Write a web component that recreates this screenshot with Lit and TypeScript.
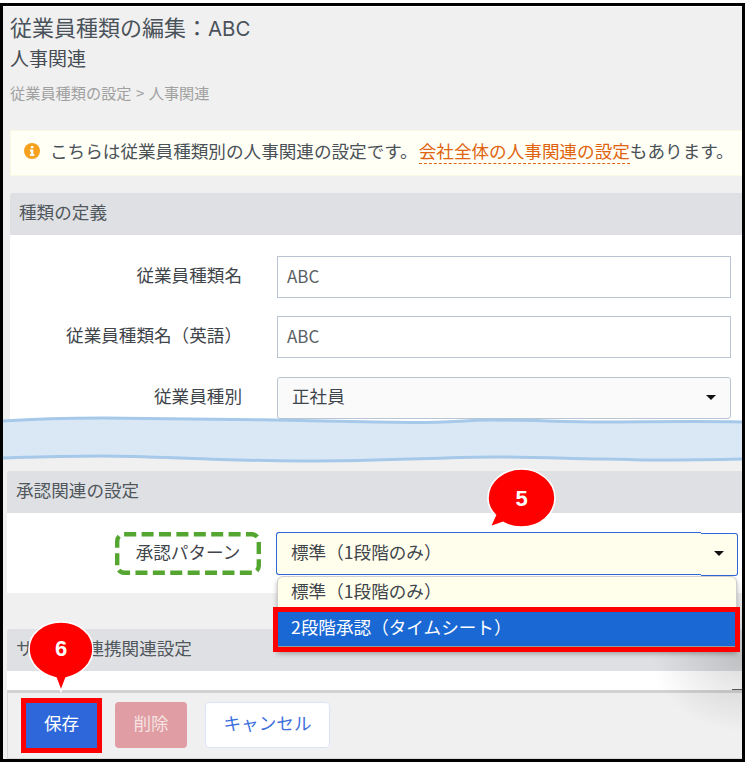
import { LitElement, html, css, svg } from "lit";
import { customElement } from "lit/decorators.js";

const caret = html`<svg class="caret" width="10" height="5" viewBox="0 0 10 5"><path d="M0 0H10L5 5Z" fill="#111"/></svg>`;

@customElement("app-root")
export class AppRoot extends LitElement {
  static styles = css`
    :host {
      display: block;
      width: 745px;
      height: 764px;
      background: #fff;
      position: relative;
      overflow: hidden;
      font-family: "Noto Sans CJK JP", "Noto Sans", sans-serif;
      font-size: 17.6px;
      color: #3f454b;
    }
    * { box-sizing: border-box; }
    .frame {
      margin-top: 3px;
      width: 745px;
      height: 759px;
      border: 3px solid #000;
      background: #fff;
      padding-top: 1px;
      display: flex;
      flex-direction: column;
    }
    .page {
      flex: 1;
      background: #f0f0f0;
      display: flex;
      flex-direction: column;
      position: relative;
      min-height: 0;
    }
    .head { padding-left: 7px; }
    .title { height: 44px; line-height: 38px; font-size: 22px; color: #4a525a; }
    .title .abc { font-family: "Inter", sans-serif; font-size: 20.4px; }
    .sub { height: 16px; line-height: 14px; font-size: 19px; color: #454c53; }
    .crumb { margin-top: 16px; height: 22px; line-height: 18px; font-size: 15.2px; color: #a0a0a0; word-spacing: 1px; }
    .alert {
      margin: 25px 0 0 7px;
      height: 46px;
      background: #fffff6;
      border: 1px solid #fbf9e2;
      border-right: none;
      display: flex;
      align-items: center;
      padding: 0 0 4px 13px;
      gap: 10px;
      white-space: nowrap;
      border-radius: 2px 0 0 2px;
    }
    .alert span { display: block; margin-bottom: -1px; line-height: 21px; color: #4a5157; }
    .alert a { display: inline-block; margin-left: 1px; color: #e0640f; border-bottom: 1.5px dashed #e0640f; line-height: 21px; height: 24px; }
    .sec-a { margin-left: 7px; }
    .sec-b { margin-left: 4px; }
    .hdr {
      height: 42px;
      background: #dfe0e3;
      line-height: 38px;
      color: #50575d;
      border-radius: 3px 0 0 0;
    }
    .sec-a .hdr { padding-left: 9px; margin-top: 17px; }
    .sec-b .hdr { padding-left: 9px; }
    .panel-a {
      background: #fff;
      height: 189px;
      padding-top: 21px;
      display: flex;
      flex-direction: column;
      gap: 18px;
    }
    .row { display: flex; align-items: center; height: 42px; }
    .lab { width: 232px; text-align: right; color: #3f454b; white-space: nowrap; padding-bottom: 5px; }
    .ctl {
      margin-left: 35px;
      width: 454px;
      height: 42px;
      border: 1px solid #b9c5d2;
      background: #fff;
      padding-left: 9px;
      line-height: 38px;
      color: #5a5f64;
      font-size: 17px;
    }
    .ctl.select {
      background: #fafafa;
      border-radius: 3px;
      padding: 0 14px;
      display: flex;
      align-items: center;
      justify-content: space-between;
      color: #3f454b;
      font-size: 17.6px;
    }
    .ctl.select span { margin-bottom: 4px; }
    .ctl.select .caret { margin-bottom: 1px; margin-right: 0; }
    .row + .row + .row { margin-top: 1px; }
    .band { display: block; margin-top: -8px; width: 739px; height: 48px; flex: none; }
    .sec-b.one { margin-top: 7px; }
    .panel-b {
      background: #fff;
      height: 80px;
      padding-top: 19px;
      display: flex;
      align-items: flex-start;
      padding-left: 108px;
      position: relative;
    }
    .pattern {
      width: 146px;
      height: 43px;
      position: relative;
      display: flex;
      align-items: center;
      justify-content: center;
      padding-bottom: 4px;
      color: #3f454b;
      white-space: nowrap;
    }
    .pattern svg { position: absolute; left: 0; top: 0; }
    .focus { display: flex; margin-left: 15px; width: 462px; position: relative; }
    .f-main {
      flex: 1;
      height: 43px;
      background: #fffeec;
      border: 1px solid #2d68d8;
      border-right: none;
      border-radius: 3px 0 0 3px;
      padding-left: 14px;
      line-height: 38px;
      color: #3f454b;
      white-space: nowrap;
    }
    .f-end {
      width: 37px;
      height: 43px;
      margin-top: 1px;
      background: #fffeec;
      border: 1px solid #2d68d8;
      border-left: none;
      border-radius: 0 3px 3px 0;
      display: flex;
      align-items: center;
      justify-content: center;
      padding-bottom: 2px;
    }
    .drop {
      position: absolute;
      left: 1px;
      top: 44px;
      width: 460px;
      height: 75px;
      background: #ffffec;
      border: 1px solid #cfcfcf;
      border-radius: 6px 6px 0 0;
      box-shadow: 0 3px 5px rgba(0, 0, 0, 0.28);
      z-index: 2;
    }
    .opt { height: 30px; line-height: 28px; padding-left: 13px; color: #3f454b; white-space: nowrap; }
    .opt.on {
      position: absolute;
      left: 0;
      top: 35px;
      width: 457px;
      height: 35px;
      line-height: 30px;
      background: #1a68d4;
      color: #fff;
      outline: 5px solid #f00;
      border-bottom: 1px solid #999;
    }
    .haze {
      position: absolute;
      right: 0;
      top: 570px;
      width: 130px;
      height: 160px;
      background: radial-gradient(ellipse 90px 75px at 100% 50%, rgba(0, 0, 0, 0.14), rgba(0, 0, 0, 0));
      pointer-events: none;
      z-index: 1;
    }
    .tick { position: absolute; right: 0; top: 682px; width: 10px; height: 1px; background: #555; z-index: 1; }
    .sec-b.two { margin-top: 36px; }
    .panel-c { background: #fff; height: 19px; }
    .bar {
      flex: 1;
      margin-left: 4px;
      border-top: 3px solid #d2d2d2;
      border-left: 1px solid #d8d8d8;
      border-bottom: 1px solid #d8d8d8;
      background: #f0f0f0;
      padding: 9px 0 0 18px;
      display: flex;
      gap: 18px;
      align-items: flex-start;
    }
    .btn {
      height: 46px;
      border-radius: 4px;
      display: flex;
      align-items: center;
      justify-content: center;
      white-space: nowrap;
      padding-bottom: 6px;
    }
    .save { width: 71px; height: 45px; margin-top: 1px; background: #2d67d9; color: #fff; outline: 5px solid #f00; border-radius: 0; }
    .del { width: 72px; background: #e09da3; color: #f6e2e2; }
    .cancel { width: 125px; background: #fff; border: 1px solid #dbe5f8; color: #3d6fdc; }
    .marks { position: absolute; left: 0; top: 0; width: 745px; height: 764px; pointer-events: none; z-index: 3; }
    .marks text { font-family: "Liberation Sans", Arial, sans-serif; font-weight: 700; font-size: 22px; fill: #fff; text-anchor: middle; }
  `;

  render() {
    return html`
      <div class="frame">
        <div class="page">
          <div class="head">
            <div class="title">従業員種類の編集：<span class="abc">ABC</span></div>
            <div class="sub">人事関連</div>
            <div class="crumb">従業員種類の設定 &gt; 人事関連</div>
          </div>
          <div class="alert">
            <svg width="16" height="16" viewBox="0 0 16 16">
              <circle cx="8" cy="8" r="8" fill="#f5a11e"/>
              <rect x="6.8" y="2.9" width="2.6" height="2.4" rx="0.4" fill="#fff"/>
              <path d="M5.9 6.6H9.3V11H10.3V12.9H5.9V11H6.9V8.4H5.9Z" fill="#fff"/>
            </svg>
            <span>こちらは従業員種類別の人事関連の設定です。<a>会社全体の人事関連の設定</a>もあります。</span>
          </div>
          <div class="sec-a">
            <div class="hdr">種類の定義</div>
            <div class="panel-a">
              <div class="row"><div class="lab">従業員種類名</div><div class="ctl">ABC</div></div>
              <div class="row"><div class="lab">従業員種類名（英語）</div><div class="ctl">ABC</div></div>
              <div class="row"><div class="lab">従業員種別</div><div class="ctl select"><span>正社員</span>${caret}</div></div>
            </div>
          </div>
          <svg class="band" viewBox="0 0 739 48">
            <path d="M0 5C30 3 60 2 100 2S290 4 372 6S450 4 490 4S560 6 600 6S690 5 739 6V43C700 44 670 44 650 44S620 43 600 43S530 41 490 41S380 45 300 45S150 40 100 40S30 41 0 42Z" fill="#dae8f6"/>
            <path d="M0 5C30 3 60 2 100 2S290 4 372 6S450 4 490 4S560 6 600 6S690 5 739 6" fill="none" stroke="#a6c9ea" stroke-width="3"/>
            <path d="M739 43C700 44 670 44 650 44S620 43 600 43S530 41 490 41S380 45 300 45S150 40 100 40S30 41 0 42" fill="none" stroke="#a6c9ea" stroke-width="3"/>
          </svg>
          <div class="sec-b one">
            <div class="hdr">承認関連の設定</div>
            <div class="panel-b">
              <div class="pattern">
                <svg width="146" height="43" viewBox="0 0 146 43"><rect x="2.2" y="2.2" width="141.6" height="38.6" rx="7" fill="none" stroke="#55a630" stroke-width="4.4" stroke-dasharray="12 5.4"/></svg>
                承認パターン
              </div>
              <div class="focus">
                <div class="f-main">標準（1段階のみ）</div>
                <div class="f-end">${caret}</div>
                <div class="drop">
                  <div class="opt">標準（1段階のみ）</div>
                  <div class="opt on">2段階承認（タイムシート）</div>
                </div>
              </div>
            </div>
          </div>
          <div class="sec-b two">
            <div class="hdr">サービス連携関連設定</div>
            <div class="panel-c"></div>
          </div>
          <div class="bar">
            <div class="btn save">保存</div>
            <div class="btn del">削除</div>
            <div class="btn cancel">キャンセル</div>
          </div>
          <div class="haze"></div>
          <div class="tick"></div>
        </div>
      </div>
      <svg class="marks" viewBox="0 0 745 764">
        ${svg`
          <path d="M490 527L495.5 515C489 509 488 503 488 498C488 482 503 469 521.5 469C540 469 555 482 555 498C555 514 540 527 521.5 527C515 527 508 525.5 503 522.5Z" fill="#f00" stroke="#fff" stroke-width="1.6"/>
          <text x="521.5" y="505.5">5</text>
          <path d="M61 691L56 678C40 674 29 663 29 649C29 634 43 622 61 622C79 622 93 634 93 649C93 663 82 674 66 678Z" fill="#f00" stroke="#fff" stroke-width="1.6"/>
          <text x="61" y="656">6</text>
        `}
      </svg>
    `;
  }
}
